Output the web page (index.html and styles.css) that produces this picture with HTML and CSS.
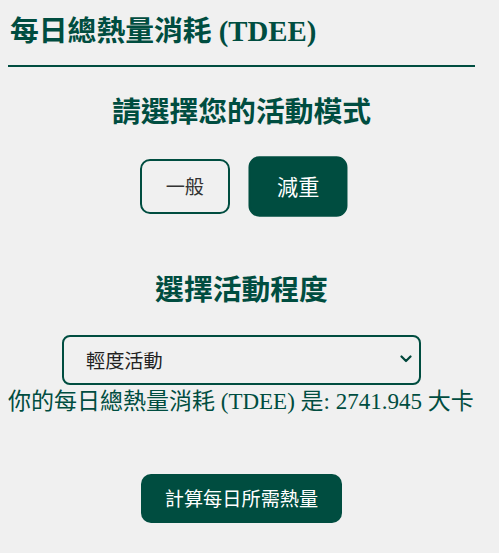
FILE: index.html
```html
<!DOCTYPE html>
<html lang="zh-Hant">
<head>
<meta charset="utf-8">
<title>TDEE</title>
<link rel="stylesheet" href="styles.css">
</head>
<body>
<div class="container">
  <h1 class="title">每日總熱量消耗 (TDEE)</h1>

  <section class="mode">
    <h2 class="section-title">請選擇您的活動模式</h2>
    <div class="mode-buttons">
      <button class="mode-btn" type="button">一般</button>
      <button class="mode-btn active" type="button">減重</button>
    </div>
  </section>

  <section class="activity">
    <h2 class="section-title">選擇活動程度</h2>
    <div class="select-wrap">
      <select class="activity-select">
        <option>輕度活動</option>
      </select>
      <svg class="chevron" width="12" height="8" viewBox="0 0 12 8" aria-hidden="true"><path d="M1.5 1.5 L6 6 L10.5 1.5" fill="none" stroke="#00473b" stroke-width="2.2" stroke-linecap="round" stroke-linejoin="round"/></svg>
    </div>
  </section>

  <p class="result">你的每日總熱量消耗 (TDEE) 是: 2741.945 大卡</p>

  <div class="actions">
    <button class="calc-btn" type="button">計算每日所需熱量</button>
  </div>
</div>
</body>
</html>
```

FILE: styles.css
```css
html, body {
  background: #f0f0f0;
}
body {
  margin: 8px;
  font-family: "Liberation Serif", "Noto Sans CJK TC", serif;
  color: #004d40;
}
.container {
  width: 467px;
}
.title {
  margin: 0;
  padding: 5px 2px 16px;
  font-size: 28.8px;
  line-height: 36px;
  font-weight: bold;
  color: #004d40;
  border-bottom: 2px solid #004d40;
}
.mode, .activity {
  text-align: center;
}
.section-title {
  margin: 27px 0 0;
  font-family: "Liberation Serif", "Noto Sans CJK TC", sans-serif;
  font-size: 28.8px;
  line-height: 36px;
  font-weight: bold;
  color: #004d40;
}
.activity .section-title {
  margin-top: 58px;
}
.mode-buttons {
  display: flex;
  justify-content: center;
  gap: 23px;
  margin-top: 29px;
}
.mode-btn {
  font-family: "Noto Sans CJK TC", sans-serif;
  font-size: 19.2px;
  line-height: 23px;
  padding: 14px 24px;
  border: 2px solid #004d40;
  border-radius: 10px;
  background: transparent;
  color: #333333;
  font-weight: normal;
}
.mode-btn.active {
  background: #004d40;
  color: #ffffff;
  transform: scale(1.1);
}
.select-wrap {
  position: relative;
  width: 359px;
  margin: 27px auto 0;
}
.activity-select {
  display: block;
  width: 359px;
  height: 50px;
  appearance: none;
  -webkit-appearance: none;
  background: transparent;
  border: 2px solid #004d40;
  border-radius: 8px;
  padding: 0 0 0 22px;
  font-family: "Noto Sans CJK TC", sans-serif;
  font-size: 19.2px;
  color: #222222;
  text-align: left;
}
.chevron {
  position: absolute;
  right: 9px;
  top: 20px;
  pointer-events: none;
}
.result {
  margin: 4px 0 0;
  font-size: 23px;
  line-height: 26px;
  color: #004d40;
  white-space: nowrap;
}
.actions {
  display: flex;
  justify-content: center;
  margin-top: 59px;
}
.calc-btn {
  font-family: "Noto Sans CJK TC", sans-serif;
  font-size: 19.2px;
  line-height: 25px;
  padding: 12px 24px;
  border: none;
  border-radius: 10px;
  background: #004d40;
  color: #ffffff;
}
```
